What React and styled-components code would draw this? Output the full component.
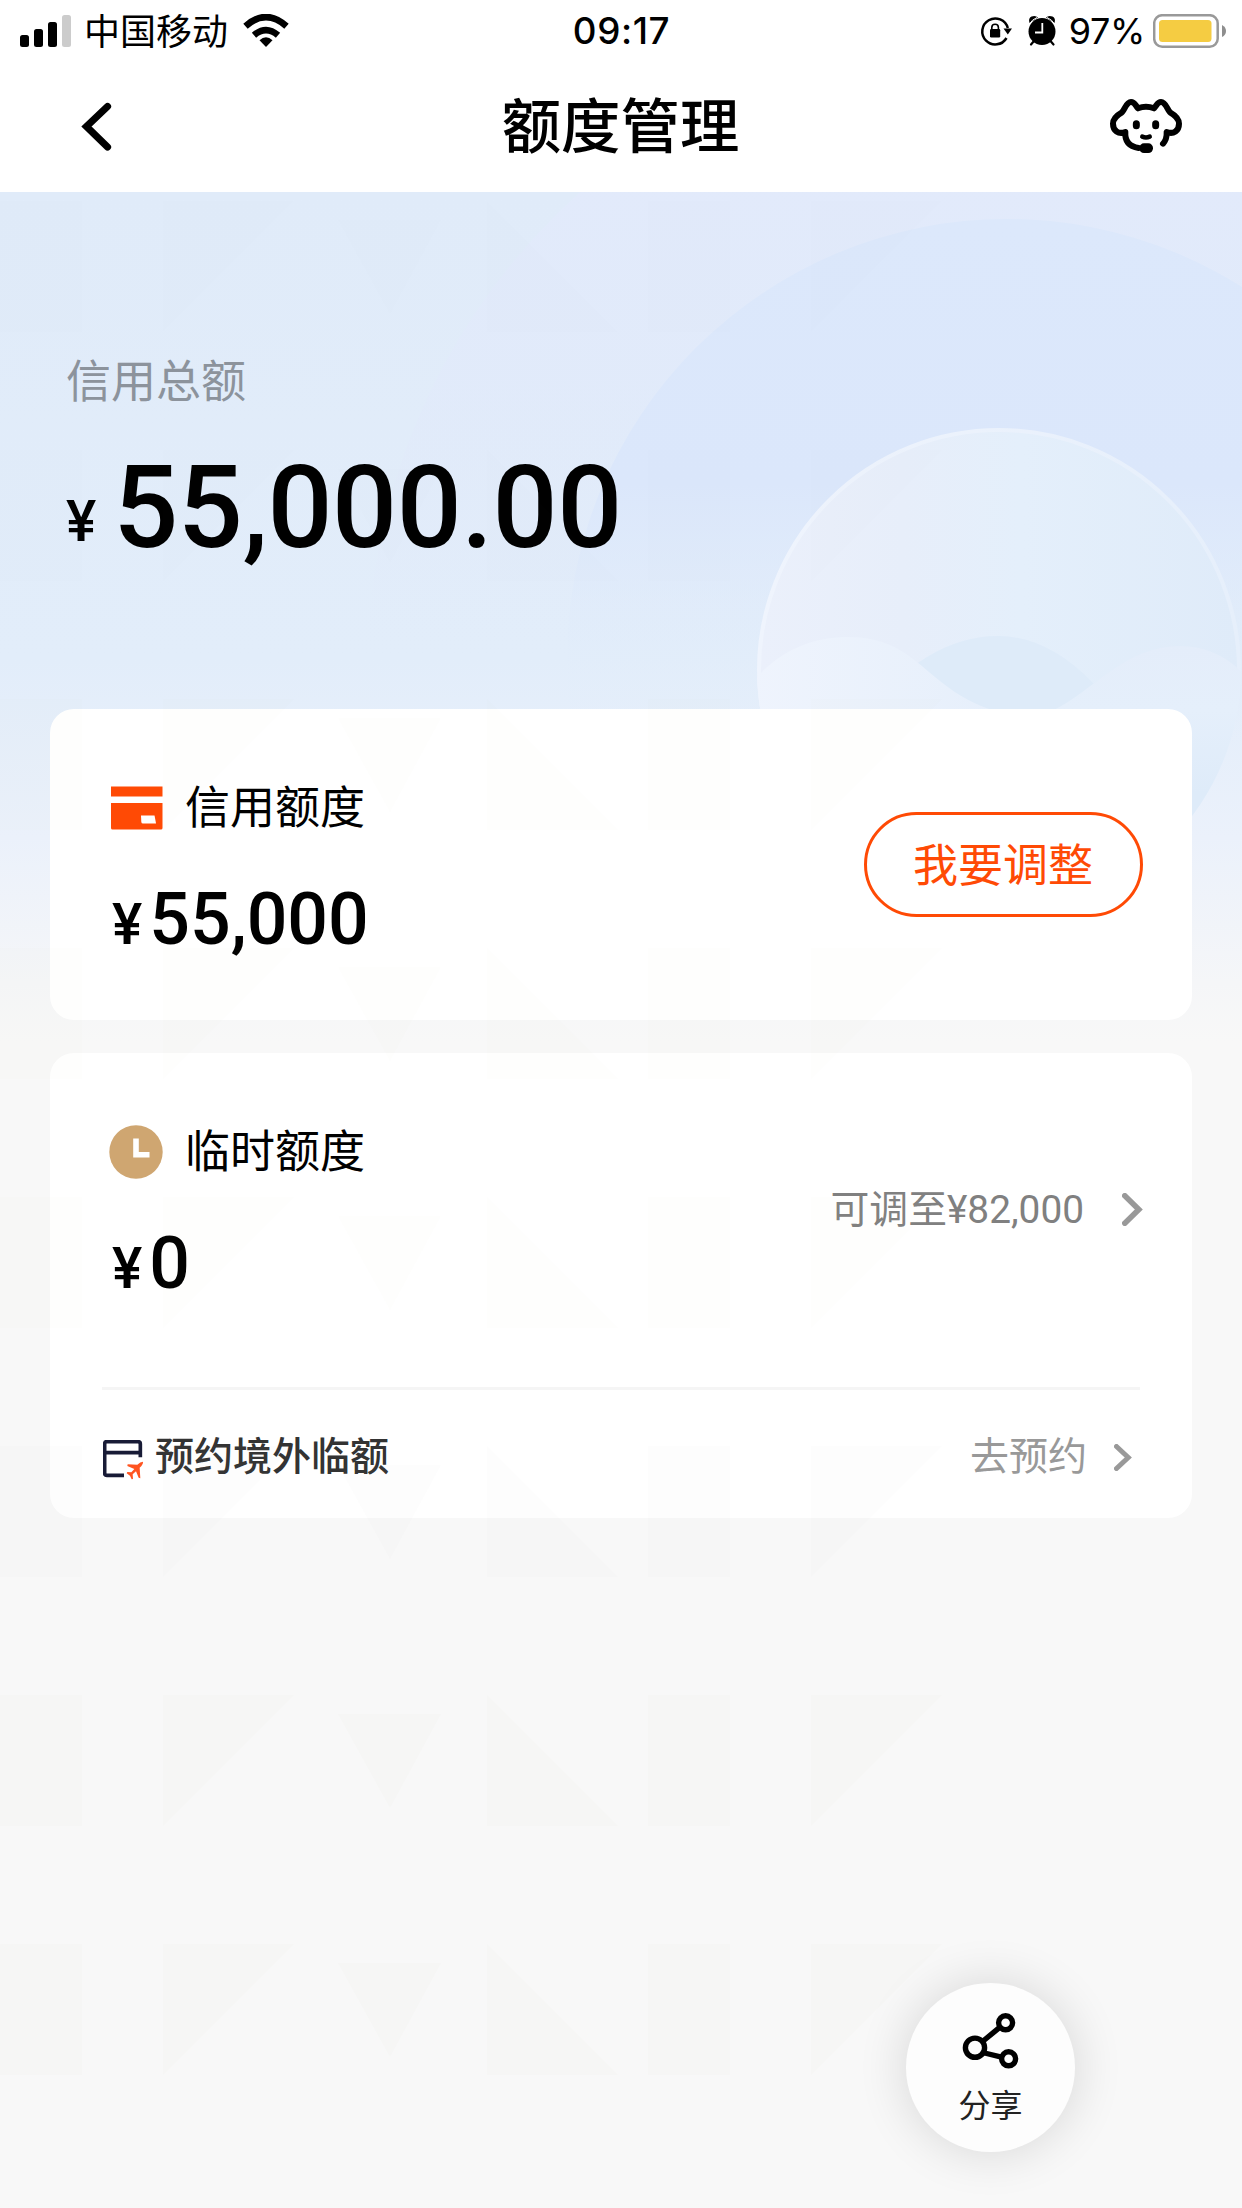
import React from 'react';
import styled, { createGlobalStyle } from 'styled-components';

const Global = createGlobalStyle`
  * { box-sizing: border-box; }
  body {
    margin: 0;
    background: #f8f8f8;
    font-family: Roboto, "Noto Sans CJK SC", sans-serif;
    color: #000;
  }
`;

const Screen = styled.main`
  position: relative;
  width: 1242px;
  height: 2208px;
  overflow: hidden;
  background: #f8f8f8;
  display: flex;
  flex-direction: column;
`;

const Watermark = styled.svg`
  position: absolute;
  left: 0;
  top: 192px;
  pointer-events: none;
`;

const StatusBar = styled.div`
  display: grid;
  grid-template-columns: 1fr auto 1fr;
  align-items: center;
  height: 62px;
  padding: 0 15px 0 20px;
  background: #fff;
  font-family: Inter, "Noto Sans CJK SC", sans-serif;
  font-size: 36px;
  line-height: 62px;
`;

const StatusGroup = styled.div`
  display: flex;
  align-items: center;
  height: 62px;
  justify-content: ${(p) => (p.$end ? 'flex-end' : 'flex-start')};
`;

const Carrier = styled.span`
  margin: 0 15px 0 12px;
  padding-top: 2px;
`;

const Clock = styled.span`
  margin-right: 4px;
  font-weight: 500;
  font-size: 36.8px;
  letter-spacing: 0.6px;
`;

const Percent = styled.span`
  margin: 0 8px 0 14px;
  letter-spacing: -0.4px;
`;

const StatusIcons = styled.div`
  display: flex;
  align-items: center;
  gap: 16px;
  margin-right: -1px;
`;

const NavBar = styled.header`
  display: grid;
  grid-template-columns: 200px 1fr 200px;
  align-items: center;
  height: 130px;
  background: #fff;
`;

const NavButton = styled.button`
  display: flex;
  border: 0;
  background: none;
  padding: ${(p) => p.$pad};
  justify-content: ${(p) => p.$side};
`;

const Title = styled.h1`
  margin: 0;
  padding: 1px 1px 0 0;
  text-align: center;
  font-size: 59.4px;
  font-weight: 500;
  line-height: 130px;
`;

const Body = styled.section`
  position: relative;
  flex: 1;
  padding: 0 50px;
`;

const Scenery = styled.svg`
  position: absolute;
  left: 0;
  top: 0;
`;

const Summary = styled.div`
  position: relative;
  height: 517px;
  padding: 158px 0 0 16px;
`;

const SummaryLabel = styled.div`
  font-size: 45px;
  line-height: 66px;
  color: #8c939c;
`;

const Money = styled.div`
  display: flex;
  align-items: baseline;
  font-weight: 500;
  font-size: ${(p) => p.$size}px;
  line-height: ${(p) => p.$line}px;
  letter-spacing: ${(p) => p.$spacing || 0}px;
  margin-top: ${(p) => p.$top || 0}px;
`;

const Yen = styled.span`
  position: relative;
  top: ${(p) => p.$shift || 0}px;
  font-size: 57px;
  line-height: 1;
  letter-spacing: 0;
  margin-left: ${(p) => p.$lead || 0}px;
  margin-right: ${(p) => p.$gap}px;
`;

const Card = styled.article`
  position: relative;
  height: ${(p) => p.$height}px;
  margin-bottom: 33px;
  border-radius: 24px;
  background: #fff;
`;

const CardTop = styled.div`
  display: flex;
  align-items: center;
  justify-content: space-between;
  padding: 0 49px 0 59px;
  height: 311px;
`;

const CardInfo = styled.div`
  padding-top: 8px;
`;

const CardHead = styled.div`
  display: flex;
  align-items: center;
  gap: 22px;
  height: 66px;
  font-size: 45px;
  line-height: 66px;

  svg { margin-top: -1px; }
`;

const AdjustButton = styled.button`
  width: 279px;
  height: 105px;
  padding: 4px 1px 0 0;
  border: 3px solid #ff4a05;
  border-radius: 53px;
  background: transparent;
  color: #ff4a05;
  font: 400 45px/1 Roboto, "Noto Sans CJK SC", sans-serif;
`;

const Link = styled.div`
  display: flex;
  align-items: center;
  padding-top: ${(p) => p.$drop || 0}px;
  color: ${(p) => p.$color};
  gap: ${(p) => p.$gap}px;
  font-size: ${(p) => p.$size}px;
  line-height: 60px;
`;

const Booking = styled.div`
  display: flex;
  align-items: center;
  justify-content: space-between;
  margin: 23px 52px 0;
  padding: 6px 8px 0 1px;
  height: 131px;
  border-top: 3px solid #f5f5f5;
`;

const BookingName = styled.div`
  display: flex;
  align-items: center;
  gap: 11px;
  font-size: 39px;
  line-height: 60px;
  font-weight: 500;
  color: #333;

  svg { margin-top: 5px; }
`;

const ShareButton = styled.button`
  position: absolute;
  left: 906px;
  top: 1983px;
  width: 169px;
  height: 169px;
  padding: 29px 0 0;
  border: 0;
  border-radius: 50%;
  background: #fdfdfd;
  box-shadow: 0 0 50px rgba(0, 0, 0, 0.14);
  display: flex;
  flex-direction: column;
  align-items: center;
  gap: 7px;
  color: #222;
  font: 400 32px/46px Roboto, "Noto Sans CJK SC", sans-serif;
`;

const Signal = () => (
  <svg width="52" height="34" viewBox="20 13 52 34">
    <rect x="20" y="34" width="9" height="12" rx="2.5" />
    <rect x="34" y="28" width="9" height="18" rx="2.5" />
    <rect x="48" y="21" width="9" height="25" rx="2.5" />
    <rect x="62" y="14" width="9" height="32" rx="2.5" fill="#ccc" />
  </svg>
);

const Wifi = () => (
  <svg width="46" height="34" viewBox="243 13 46 34">
    <g fill="none" stroke="#000" strokeWidth="6.6">
      <path d="M245.5 25.2Q266 7 286.5 25.2" />
      <path d="M254 34.2Q266 24 278 34.2" />
    </g>
    <path d="M259.5 39.3Q266 33 272.5 39.3L266 46Z" />
  </svg>
);

const RotationLock = () => (
  <svg width="32" height="32" viewBox="980 16 32 32">
    <path d="M1006.5 39A13 13 0 1 1 1007.8 29" fill="none" stroke="#000" strokeWidth="2.5" />
    <path d="M1003.5 29.5H1012L1007.8 35.5Z" />
    <rect x="990" y="30" width="10.2" height="8.5" rx="1.2" />
    <path d="M991.8 31V28.5a3.3 3.3 0 0 1 6.6 0V31" fill="none" stroke="#000" strokeWidth="1.6" />
  </svg>
);

const Alarm = () => (
  <svg width="28" height="32" viewBox="1028 15 28 32">
    <circle cx="1042" cy="31.5" r="13.5" />
    <path d="M1029.5 23Q1028 18 1031.5 16.5Q1035.5 15 1038 17.5ZM1054.5 23Q1056 18 1052.5 16.5Q1048.5 15 1046 17.5Z" />
    <path d="M1037 17.5Q1032 19.5 1029.5 24M1047 17.5Q1052 19.5 1054.5 24" fill="none" stroke="#fff" strokeWidth="1" />
    <path d="M1034 41l-3 3.5M1050.5 41l3 3.5" stroke="#000" strokeWidth="2.2" strokeLinecap="round" />
    <path d="M1042.3 23V32.5H1035" fill="none" stroke="#fff" strokeWidth="1.8" />
  </svg>
);

const Battery = () => (
  <svg width="74" height="34" viewBox="1153 13 74 34">
    <rect x="1154.2" y="14.2" width="63.5" height="31.5" rx="8" fill="none" stroke="#999" strokeWidth="2.5" />
    <rect x="1159" y="19" width="52.5" height="22" rx="3.5" fill="#f5cc42" />
    <path d="M1222 24q4 2 4 6t-4 6Z" fill="#8e8e8e" />
  </svg>
);

const Puppy = () => (
  <svg width="74" height="56" viewBox="627 294 222 168">
    <g fill="none" stroke="#000" strokeWidth="18" strokeLinecap="round" strokeLinejoin="round">
      <path d="M716 444C690 440 674 425 676 396C655 404 639 392 639 371C639 354 652 345 666 337C675 327 679 306 693 306C704 306 705 314 714 325Q738 315 762 325C771 314 773 306 783 306C797 306 801 327 810 337C824 345 837 354 837 371C837 392 821 404 800 396Q801 418 789 431" />
    </g>
    <g stroke="#000" strokeLinecap="round" fill="none">
      <path d="M709 371V377M767 371V377" strokeWidth="21" />
      <path d="M727 410Q738 415 749 410" strokeWidth="14" />
    </g>
    <rect x="718" y="430" width="41" height="29" rx="14" />
  </svg>
);

const CreditCard = () => (
  <svg width="54" height="46" viewBox="0 0 54 46">
    <path fill="#ff4a05" d="M2 1.5h51.5V11.5H2ZM2 18h51.5v25a1.5 1.5 0 0 1-1.5 1.5H3.5A1.5 1.5 0 0 1 2 43Z" />
    <path fill="#fff" d="M32 30.5h13.5l1.5 8H34Q32.5 38.5 32.3 37Z" />
  </svg>
);

const ClockBadge = () => (
  <svg width="54" height="54" viewBox="0 0 54 54">
    <circle cx="27" cy="27" r="26.7" fill="#cfa671" />
    <path d="M27 13.5V29.8H40.5" fill="none" stroke="#fff" strokeWidth="5.6" />
  </svg>
);

const TravelCard = () => (
  <svg width="41" height="40" viewBox="189 1202 123 120">
    <path d="M194 1240H301M301 1254V1214Q301 1207 294 1207H200Q194 1207 194 1214V1301Q194 1308 201 1308H252" fill="none" stroke="#181b36" strokeWidth="11" />
    <path fill="#ff5420" d="M309 1267Q310 1275 299 1285L301 1317L296 1315L288 1296L278 1305L279 1319L275 1320L270 1309L260 1302L262 1298L274 1299L283 1289L262 1280L263 1275L292 1276Q301 1267 309 1267Z" />
  </svg>
);

const Chevron = ({ width, height, color, stroke }) => (
  <svg width={width} height={height} viewBox={`0 0 ${width} ${height}`}>
    <path
      d={`M${stroke / 2} ${stroke / 2}L${width - stroke * 0.75} ${height / 2}L${stroke / 2} ${height - stroke / 2}`}
      fill="none"
      stroke={color}
      strokeWidth={stroke}
      strokeLinecap="round"
    />
  </svg>
);

const ShareGlyph = () => (
  <svg width="58" height="64" viewBox="962 2012 58 64">
    <g fill="none" stroke="#000" strokeWidth="5.4">
      <circle cx="975" cy="2047.7" r="9.6" />
      <circle cx="1005.6" cy="2022.8" r="7" />
      <circle cx="1008.6" cy="2058.8" r="7" />
      <path d="M982.5 2041.5L1000 2027.2M984.6 2053L1001.5 2057.2" />
    </g>
  </svg>
);

/* Soft circles and waves behind the total amount; coordinates start at the page top. */
const HeroScenery = () => (
  <Scenery width="1242" height="850" viewBox="0 192 1242 850">
    <defs>
      <linearGradient id="sky" x1="0" y1="0" x2="0" y2="1">
        <stop offset="0" stopColor="#e0ebf9" />
        <stop offset="0.55" stopColor="#e2edfa" />
        <stop offset="0.76" stopColor="#ebf1fb" />
        <stop offset="0.93" stopColor="#f5f6f8" />
        <stop offset="1" stopColor="#f8f8f8" />
      </linearGradient>
      <linearGradient id="outer" x1="0" y1="0" x2="0" y2="1">
        <stop offset="0.12" stopColor="#e2eafb" />
        <stop offset="0.35" stopColor="#e1eafa" stopOpacity="0.6" />
        <stop offset="0.48" stopColor="#e2ebfa" stopOpacity="0" />
      </linearGradient>
      <linearGradient id="halo" x1="0" y1="0" x2="0" y2="1">
        <stop offset="0" stopColor="#dce8fb" />
        <stop offset="0.3" stopColor="#dbe7fb" />
        <stop offset="0.52" stopColor="#e2edfa" stopOpacity="0.3" />
        <stop offset="0.6" stopColor="#e2edfa" stopOpacity="0" />
      </linearGradient>
      <linearGradient id="moon" x1="0" y1="0.5" x2="1" y2="0.5">
        <stop offset="0" stopColor="#ebf0fb" />
        <stop offset="0.3" stopColor="#e7eefa" />
        <stop offset="0.55" stopColor="#e4effb" />
        <stop offset="1" stopColor="#dfebf9" />
      </linearGradient>
      <linearGradient id="rim" x1="0" y1="0" x2="1" y2="0">
        <stop offset="0" stopColor="#eff4fd" />
        <stop offset="1" stopColor="#e6effb" />
      </linearGradient>
      <linearGradient id="waveLeft" x1="0" y1="0" x2="1" y2="0">
        <stop offset="0" stopColor="#eff4fd" />
        <stop offset="1" stopColor="#e6effb" />
      </linearGradient>
      <linearGradient id="waveRight" x1="0" y1="0" x2="0" y2="1">
        <stop offset="0" stopColor="#e4edfa" />
        <stop offset="0.35" stopColor="#e5effb" />
        <stop offset="0.8" stopColor="#deebf9" />
      </linearGradient>
      <clipPath id="moonClip"><circle cx="999" cy="670" r="242" /></clipPath>
    </defs>
    <rect y="192" width="1242" height="850" fill="url(#sky)" />
    <circle cx="1007" cy="669" r="640" fill="url(#outer)" />
    <circle cx="1007" cy="659" r="440" fill="url(#halo)" />
    <circle cx="999" cy="670" r="240" fill="url(#moon)" stroke="url(#rim)" strokeWidth="4" />
    <g clipPath="url(#moonClip)">
      <path d="M860 720Q925 636 998 636Q1048 636 1094 684L1130 800H860Z" fill="#deebf9" />
      <path d="M750 685C780 648 815 637 848 637C918 637 925 688 992 710L1000 830H750Z" fill="url(#waveLeft)" />
      <path d="M1052 711C1095 690 1125 646 1180 646Q1215 646 1242 672V830H1052Z" fill="url(#waveRight)" />
    </g>
  </Scenery>
);

const rows = [
  { y: 201, strength: 0.012 },
  { y: 450, strength: 0.008 },
  { y: 699, strength: 0.014 },
  { y: 948, strength: 0.015 },
  { y: 1197, strength: 0.015 },
  { y: 1446, strength: 0.018 },
  { y: 1695, strength: 0.025 },
  { y: 1944, strength: 0.025 },
];

const PatternLayer = () => (
  <Watermark width="1242" height="2016" viewBox="0 192 1242 2016">
    <g fill="rgb(170,175,140)">
      {rows.map(({ y, strength }) => (
        <path
          key={y}
          fillOpacity={strength}
          transform={`translate(0 ${y})`}
          d="M0 0H82V131H0ZM163 0H294L163 131ZM338 19H441L390 113ZM487 0L618 131H487ZM648 0H730V131H648ZM811 0H942L811 131Z"
        />
      ))}
    </g>
  </Watermark>
);

export default function App() {
  return (
    <Screen>
      <Global />
      <StatusBar>
        <StatusGroup>
          <Signal />
          <Carrier>中国移动</Carrier>
          <Wifi />
        </StatusGroup>
        <Clock>09:17</Clock>
        <StatusGroup $end>
          <StatusIcons>
            <RotationLock />
            <Alarm />
          </StatusIcons>
          <Percent>97%</Percent>
          <Battery />
        </StatusGroup>
      </StatusBar>
      <NavBar>
        <NavButton $pad="0 0 2px 81px" $side="flex-start" aria-label="返回">
          <svg width="32" height="50" viewBox="0 0 32 50">
            <path d="M26.5 4.5L5.5 24.5L26.5 45" fill="none" stroke="#000" strokeWidth="7.2" strokeLinecap="round" />
          </svg>
        </NavButton>
        <Title>额度管理</Title>
        <NavButton $pad="0 59px 3px 0" $side="flex-end" aria-label="客服">
          <Puppy />
        </NavButton>
      </NavBar>
      <Body>
        <HeroScenery />
        <Summary>
          <SummaryLabel>信用总额</SummaryLabel>
          <Money $size={114.5} $line={136} $top={24} $spacing={-0.5}>
            <Yen $gap={17} $shift={-6}>¥</Yen>55,000.00
          </Money>
        </Summary>
        <Card $height={311}>
          <CardTop>
            <CardInfo>
              <CardHead><CreditCard />信用额度</CardHead>
              <Money $size={71.6} $line={84} $top={36}>
                <Yen $lead={3} $gap={7}>¥</Yen>55,000
              </Money>
            </CardInfo>
            <AdjustButton>我要调整</AdjustButton>
          </CardTop>
        </Card>
        <Card $height={465}>
          <CardTop>
            <CardInfo>
              <CardHead><ClockBadge />临时额度</CardHead>
              <Money $size={71.6} $line={84} $top={36}>
                <Yen $lead={3} $gap={7}>¥</Yen>0
              </Money>
            </CardInfo>
            <Link $color="#808080" $gap={38} $size={38.8} $drop={2}>
              可调至¥82,000
              <Chevron width={21} height={33} color="#999" stroke={5.6} />
            </Link>
          </CardTop>
          <Booking>
            <BookingName><TravelCard />预约境外临额</BookingName>
            <Link $color="#999" $gap={27} $size={39}>
              去预约
              <Chevron width={18} height={27} color="#999" stroke={5} />
            </Link>
          </Booking>
        </Card>
      </Body>
      <PatternLayer />
      <ShareButton>
        <ShareGlyph />
        分享
      </ShareButton>
    </Screen>
  );
}
